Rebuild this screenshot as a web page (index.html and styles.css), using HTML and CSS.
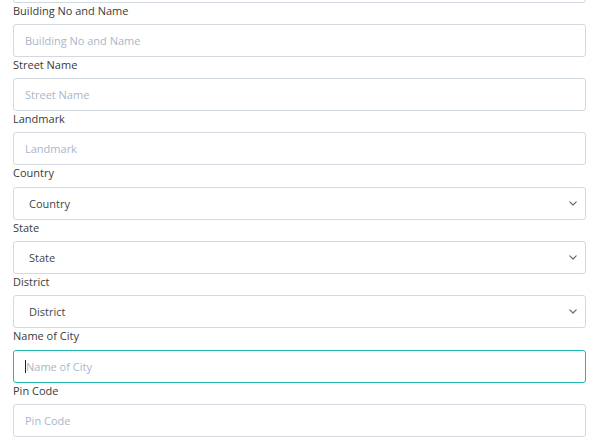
FILE: index.html
```html
<!DOCTYPE html>
<html>
<head>
<meta charset="utf-8">
<link rel="stylesheet" href="styles.css">
</head>
<body>
<form class="form">
  <div class="field field-prev">
    <div class="control"></div>
  </div>
  <div class="field">
    <label class="label">Building No and Name</label>
    <div class="control"><span class="ph">Building No and Name</span></div>
  </div>
  <div class="field">
    <label class="label">Street Name</label>
    <div class="control"><span class="ph">Street Name</span></div>
  </div>
  <div class="field">
    <label class="label">Landmark</label>
    <div class="control"><span class="ph">Landmark</span></div>
  </div>
  <div class="field">
    <label class="label">Country</label>
    <div class="control select"><span class="val">Country</span>
      <svg class="chev" width="8" height="5" viewBox="0 0 8 5"><path d="M0.8 0.8l3.2 3.2 3.2-3.2" fill="none" stroke="#6b6b6b" stroke-width="1.2" stroke-linecap="round" stroke-linejoin="round"/></svg>
    </div>
  </div>
  <div class="field">
    <label class="label">State</label>
    <div class="control select"><span class="val">State</span>
      <svg class="chev" width="8" height="5" viewBox="0 0 8 5"><path d="M0.8 0.8l3.2 3.2 3.2-3.2" fill="none" stroke="#6b6b6b" stroke-width="1.2" stroke-linecap="round" stroke-linejoin="round"/></svg>
    </div>
  </div>
  <div class="field">
    <label class="label">District</label>
    <div class="control select"><span class="val">District</span>
      <svg class="chev" width="8" height="5" viewBox="0 0 8 5"><path d="M0.8 0.8l3.2 3.2 3.2-3.2" fill="none" stroke="#6b6b6b" stroke-width="1.2" stroke-linecap="round" stroke-linejoin="round"/></svg>
    </div>
  </div>
  <div class="field">
    <label class="label">Name of City</label>
    <div class="control focus"><span class="caret"></span><span class="ph">Name of City</span></div>
  </div>
  <div class="field">
    <label class="label">Pin Code</label>
    <div class="control"><span class="ph">Pin Code</span></div>
  </div>
</form>
</body>
</html>
```
FILE: styles.css
```css
html, body {
  margin: 0;
  padding: 0;
  background: #ffffff;
}
body {
  font-family: "Open Sans", "Noto Sans", sans-serif;
  overflow: hidden;
}
.form {
  display: flex;
  flex-direction: column;
  padding: 0 28px 0 13px;
  width: 573px;
}
.field {
  display: flex;
  flex-direction: column;
}
.field-prev {
  margin-top: -30.5px;
}
.label {
  font-size: 11px;
  color: #3a3a3a;
  height: 16px;
  line-height: 16px;
  margin-bottom: 5.3px;
}
.control {
  box-sizing: border-box;
  height: 33px;
  border: 1px solid #d3d9e0;
  border-radius: 3px;
  display: flex;
  align-items: center;
  padding: 0 11px;
  font-size: 11px;
}
.ph {
  color: #a9b6ca;
}
.select {
  justify-content: space-between;
  padding: 0 7px 0 15px;
}
.chev {
  margin-right: 1px;
}
.val {
  color: #3f4650;
}
.focus {
  border-color: #22b8b2;
}
.caret {
  width: 1px;
  height: 13px;
  background: #222;
}
```
